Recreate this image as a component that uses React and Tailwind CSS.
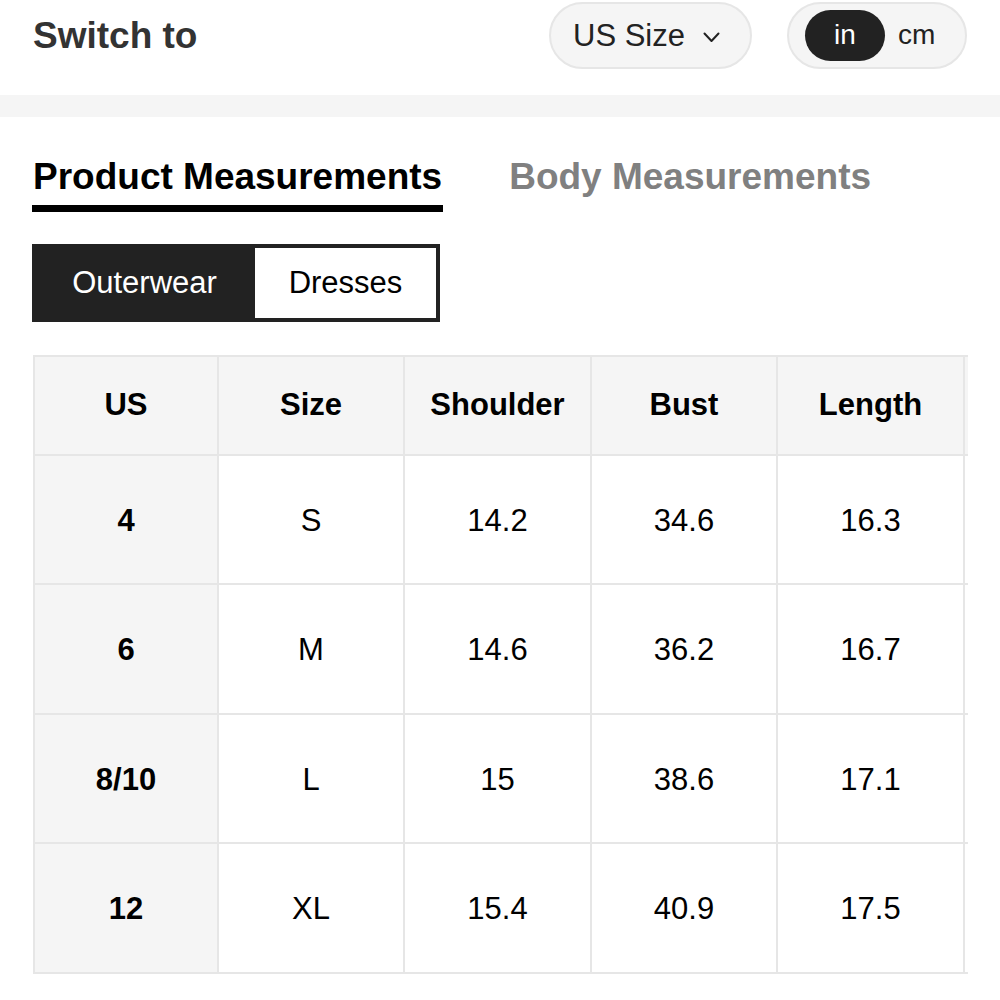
import React from "react";

const rows = [
  { us: "4", size: "S", shoulder: "14.2", bust: "34.6", length: "16.3", h: "h-[129px]" },
  { us: "6", size: "M", shoulder: "14.6", bust: "36.2", length: "16.7", h: "h-[130px]" },
  { us: "8/10", size: "L", shoulder: "15", bust: "38.6", length: "17.1", h: "h-[129px]" },
  { us: "12", size: "XL", shoulder: "15.4", bust: "40.9", length: "17.5", h: "h-[130px]" },
];

const widths = ["w-[184px]", "w-[186px]", "w-[187px]", "w-[186px]", "w-[187px]", "w-[186px]"];

function Cell({ children, i, className = "" }) {
  return (
    <div
      className={
        widths[i] +
        " shrink-0 border-r-2 border-b-2 border-[#e6e6e6] flex items-center justify-center text-[31px] text-black " +
        className
      }
    >
      {children}
    </div>
  );
}

export default function App() {
  return (
    <div className="w-[1000px] h-[1000px] bg-white font-['Liberation_Sans',Arial,sans-serif] overflow-hidden">
      {/* header */}
      <div className="h-[70px] flex items-center justify-between pl-[33px] pr-[33px]">
        <div className="text-[37px] font-bold text-[#333] leading-none">Switch to</div>
        <div className="flex items-center gap-[35px]">
          <div className="w-[203px] h-[67px] rounded-full border-2 border-[#e6e6e6] bg-[#f5f5f5] flex items-center pl-[22px]">
            <span className="text-[31px] text-[#222] leading-none">US Size</span>
            <svg className="ml-[18px] mt-[4px]" width="17" height="11" viewBox="0 0 17 11" fill="none">
              <path d="M1.5 1.5 L8.5 9 L15.5 1.5" stroke="#222" strokeWidth="2" strokeLinecap="round" strokeLinejoin="round" />
            </svg>
          </div>
          <div className="w-[180px] h-[67px] rounded-full border-2 border-[#e6e6e6] bg-[#f5f5f5] flex items-center pl-[16px]">
            <div className="w-[80px] h-[51px] rounded-full bg-[#222] flex items-center justify-center text-[28px] text-white leading-none">
              in
            </div>
            <span className="ml-[13px] text-[28px] text-[#222] leading-none">cm</span>
          </div>
        </div>
      </div>

      {/* band */}
      <div className="mt-[25px] h-[22px] bg-[#f5f5f5]" />

      {/* tabs */}
      <div className="pl-[33px] pt-[41px] flex gap-[67px]">
        <div className="flex flex-col">
          <div className="text-[37px] font-bold text-black leading-none">Product Measurements</div>
          <div className="mt-[10px] h-[7px] bg-black -ml-[1px] -mr-[1px]" />
        </div>
        <div className="text-[37px] font-bold text-[#808080] leading-none">Body Measurements</div>
      </div>

      {/* segmented */}
      <div className="ml-[32px] mt-[32px] w-[408px] h-[78px] border-4 border-[#222] bg-[#222] flex">
        <div className="w-[219px] flex items-center justify-center text-[31px] text-white pr-[2px]">Outerwear</div>
        <div className="flex-1 bg-white flex items-center justify-center text-[31px] text-black">Dresses</div>
      </div>

      {/* table */}
      <div className="ml-[33px] mt-[33px] w-[935px] overflow-hidden">
        <div className="w-max border-l-2 border-t-2 border-[#e6e6e6]">
          <div className="flex h-[99px] bg-[#f5f5f5]">
            <Cell i={0} className="font-bold">US</Cell>
            <Cell i={1} className="font-bold">Size</Cell>
            <Cell i={2} className="font-bold">Shoulder</Cell>
            <Cell i={3} className="font-bold">Bust</Cell>
            <Cell i={4} className="font-bold">Length</Cell>
            <Cell i={5}></Cell>
          </div>
          {rows.map((r) => (
            <div key={r.us} className={"flex " + r.h}>
              <Cell i={0} className="font-bold bg-[#f5f5f5] pt-[3px]">{r.us}</Cell>
              <Cell i={1} className="pt-[3px]">{r.size}</Cell>
              <Cell i={2} className="pt-[3px]">{r.shoulder}</Cell>
              <Cell i={3} className="pt-[3px]">{r.bust}</Cell>
              <Cell i={4} className="pt-[3px]">{r.length}</Cell>
              <Cell i={5}></Cell>
            </div>
          ))}
        </div>
      </div>
    </div>
  );
}
